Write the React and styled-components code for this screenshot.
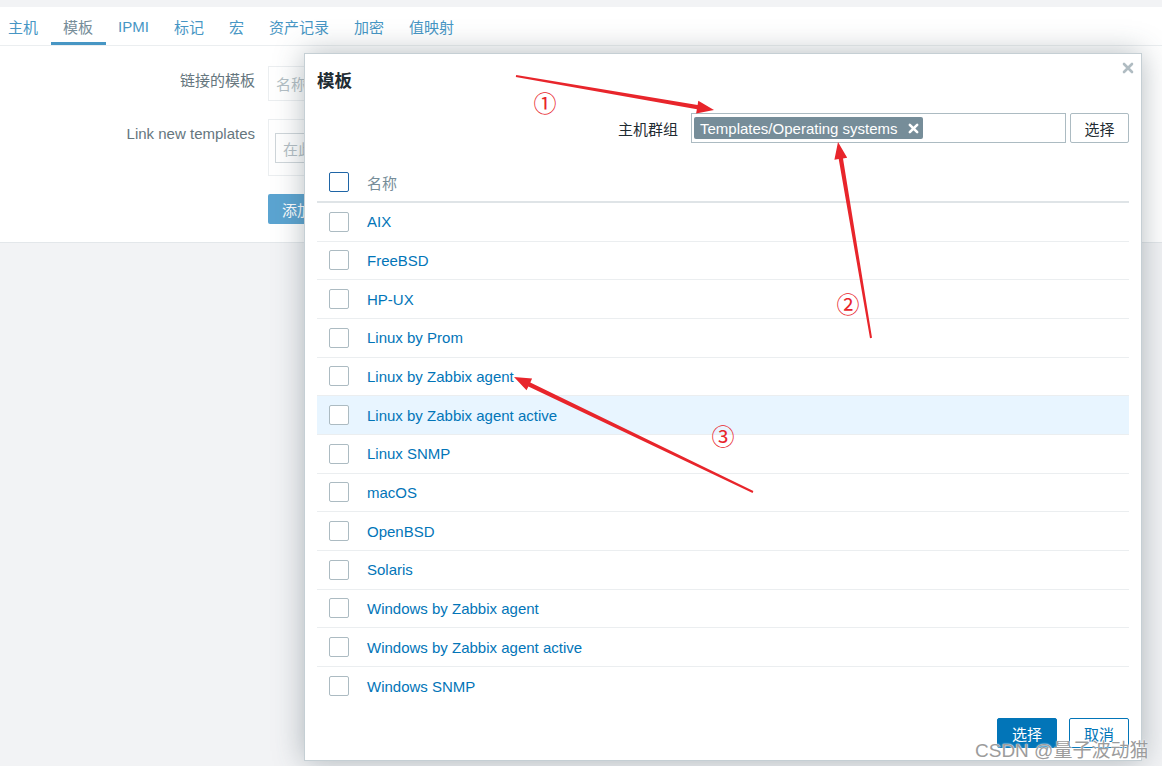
import React from "react";
import styled, { createGlobalStyle } from "styled-components";

const GlobalStyle = createGlobalStyle`
  html, body {
    margin: 0;
    padding: 0;
  }
  body {
    background: #f2f3f5;
    font-family: "Liberation Sans", Arial, "Noto Sans CJK SC", sans-serif;
    font-size: 15px;
    color: #1f2c33;
  }
  * { box-sizing: border-box; }
`;

const tabs = ["主机", "模板", "IPMI", "标记", "宏", "资产记录", "加密", "值映射"];

const templates = [
  "AIX",
  "FreeBSD",
  "HP-UX",
  "Linux by Prom",
  "Linux by Zabbix agent",
  "Linux by Zabbix agent active",
  "Linux SNMP",
  "macOS",
  "OpenBSD",
  "Solaris",
  "Windows by Zabbix agent",
  "Windows by Zabbix agent active",
  "Windows SNMP",
];

const Page = styled.div`
  position: relative;
  width: 1162px;
  height: 766px;
  overflow: hidden;
  padding-top: 7px;
`;

const TabBar = styled.div`
  display: flex;
  height: 39px;
  margin-left: -4.5px;
  background: #fff;
  border-bottom: 1px solid #ebeef0;
`;

const Tab = styled.div`
  display: flex;
  align-items: center;
  padding: 3px 12.5px 0;
  height: 100%;
  color: ${(p) => (p.$active ? "#768d99" : "#4796c4")};
  border-bottom: 3px solid ${(p) => (p.$active ? "#4796c4" : "transparent")};
`;

const FormPanel = styled.div`
  display: grid;
  grid-template-columns: 255px 1fr;
  column-gap: 13px;
  row-gap: 18px;
  align-items: start;
  align-content: start;
  height: 197px;
  padding-top: 20px;
  background: #fff;
  border-bottom: 1px solid #e3e7ea;
`;

const Label = styled.div`
  text-align: right;
  line-height: 30px;
  color: #65767e;
`;

const TextInput = styled.div`
  width: ${(p) => p.$width || "460px"};
  height: ${(p) => p.$height || "35px"};
  display: flex;
  align-items: center;
  padding: 0 7px;
  border: 1px solid ${(p) => p.$border || "#ebeef0"};
  color: #b4bfc5;
  background: #fff;
`;

const Box = styled.div`
  width: 460px;
  height: 57px;
  padding: 13px 6px;
  border: 1px solid #ebeef0;
`;

const AddButton = styled.div`
  width: 60px;
  height: 30px;
  display: flex;
  align-items: center;
  padding-left: 14px;
  border-radius: 2px;
  background: #5ba4d1;
  color: #fff;
`;

const Modal = styled.div`
  position: absolute;
  left: 304px;
  top: 53px;
  width: 838px;
  height: 708px;
  display: flex;
  flex-direction: column;
  padding: 0 12px 12px;
  background: #fff;
  border: 1px solid #c5cfd4;
  box-shadow: 0 0 28px rgba(60, 80, 90, 0.38);
`;

const Close = styled.div`
  position: absolute;
  right: 7px;
  top: 8px;
  width: 12px;
  height: 12px;
  display: flex;
`;

const Title = styled.h4`
  margin: 17px 0 0;
  font-size: 17.5px;
  line-height: 20px;
  font-weight: bold;
  color: #1f2c33;
`;

const FilterRow = styled.div`
  display: flex;
  justify-content: flex-end;
  align-items: center;
  margin-top: 22px;
`;

const FilterLabel = styled.span`
  margin-right: 13px;
  color: #1f2c33;
`;

const MultiSelect = styled.div`
  width: 375px;
  height: 30px;
  display: flex;
  align-items: center;
  padding: 0 2px;
  border: 1px solid #acbbc2;
`;

const Chip = styled.div`
  display: flex;
  align-items: center;
  gap: 10px;
  height: 22px;
  padding: 0 4px 0 6px;
  border-radius: 2px;
  background: #768d99;
  color: #fff;
`;

const PlainButton = styled.div`
  width: 59px;
  height: 30px;
  margin-left: 4px;
  display: flex;
  align-items: center;
  justify-content: center;
  border: 1px solid #acbbc2;
  border-radius: 2px;
  color: #1f2c33;
`;

const Table = styled.div`
  margin-top: 20px;
  display: flex;
  flex-direction: column;
`;

const Row = styled.div`
  display: flex;
  align-items: center;
  height: ${(p) => (p.$head ? "40px" : "38.67px")};
  padding-left: 12px;
  background: ${(p) => (p.$hover ? "#e8f5ff" : "transparent")};
  border-bottom: ${(p) =>
    p.$head ? "2px solid #dfe4e7" : p.$last ? "none" : "1px solid #ebeef0"};
  color: ${(p) => (p.$head ? "#768d99" : "#0275b8")};
`;

const Check = styled.span`
  width: 20px;
  height: 20px;
  margin-right: 18px;
  border: 1px solid ${(p) => (p.$head ? "#1f65a6" : "#acbbc2")};
  border-radius: 2px;
  background: #fff;
`;

const Footer = styled.div`
  margin-top: auto;
  display: flex;
  justify-content: flex-end;
  gap: 12px;
`;

const FooterButton = styled.div`
  width: 60px;
  height: 30px;
  display: flex;
  align-items: center;
  justify-content: center;
  border: 1px solid #0275b8;
  border-radius: 2px;
  background: ${(p) => (p.$primary ? "#0275b8" : "#fff")};
  color: ${(p) => (p.$primary ? "#fff" : "#0275b8")};
`;

const Annotations = styled.svg`
  position: absolute;
  left: 0;
  top: 0;
  pointer-events: none;
`;

const Watermark = styled.div`
  position: absolute;
  left: 975px;
  top: 735px;
  font-size: 19px;
  color: #9c9c9c;
  text-shadow: 0 0 1px #ffffff, 0 0 2px #ffffff;
`;

function Cross({ color, size = 12, width = 2.6 }) {
  return (
    <svg width={size} height={size} viewBox="0 0 12 12">
      <path d="M2 2 L10 10 M10 2 L2 10" stroke={color} strokeWidth={width} strokeLinecap="round" />
    </svg>
  );
}

// tapered arrow: thin tail, wider shaft, filled head
function arrowPoints(x1, y1, x2, y2) {
  const dx = x2 - x1;
  const dy = y2 - y1;
  const len = Math.hypot(dx, dy);
  const ux = dx / len;
  const uy = dy / len;
  const nx = -uy;
  const ny = ux;
  const headLen = 17;
  const headW = 6.5;
  const shaftW = 2.2;
  const tailW = 1;
  const bx = x2 - ux * headLen;
  const by = y2 - uy * headLen;
  const nb = (w) => [bx + nx * w, by + ny * w];
  const nt = (w) => [x1 + nx * w, y1 + ny * w];
  const pts = [
    nt(tailW),
    nb(shaftW),
    nb(headW),
    [x2, y2],
    nb(-headW),
    nb(-shaftW),
    nt(-tailW),
  ];
  return pts.map((p) => p.map((v) => v.toFixed(1)).join(",")).join(" ");
}

const arrows = [
  [516, 76, 714, 110],
  [871, 338, 838, 142],
  [753, 492, 514, 377],
];

const marks = [
  ["①", 545, 104],
  ["②", 848, 305],
  ["③", 723, 437],
];

export default function App() {
  return (
    <>
      <GlobalStyle />
      <Page>
        <TabBar>
          {tabs.map((t) => (
            <Tab key={t} $active={t === "模板"}>
              {t}
            </Tab>
          ))}
        </TabBar>

        <FormPanel>
          <Label>链接的模板</Label>
          <TextInput>名称</TextInput>
          <Label>Link new templates</Label>
          <Box>
            <TextInput $height="30px" $border="#cfd6da" $width="440px">
              在此输入搜索
            </TextInput>
          </Box>
          <span />
          <AddButton>添加</AddButton>
        </FormPanel>

        <Modal>
          <Close>
            <Cross color="#b0bcc2" />
          </Close>
          <Title>模板</Title>
          <FilterRow>
            <FilterLabel>主机群组</FilterLabel>
            <MultiSelect>
              <Chip>
                Templates/Operating systems
                <Cross color="#fff" size={11} width={2.8} />
              </Chip>
            </MultiSelect>
            <PlainButton>选择</PlainButton>
          </FilterRow>

          <Table>
            <Row $head>
              <Check $head />
              名称
            </Row>
            {templates.map((name, i) => (
              <Row
                key={name}
                $hover={name === "Linux by Zabbix agent active"}
                $last={i === templates.length - 1}
              >
                <Check />
                {name}
              </Row>
            ))}
          </Table>

          <Footer>
            <FooterButton $primary>选择</FooterButton>
            <FooterButton>取消</FooterButton>
          </Footer>
        </Modal>

        <Annotations width="1162" height="766">
          {arrows.map((a, i) => (
            <polygon key={i} points={arrowPoints(...a)} fill="#e8252b" />
          ))}
          {marks.map(([m, x, y]) => (
            <text
              key={m}
              x={x}
              y={y + 8}
              textAnchor="middle"
              fontSize="23"
              fill="#e8252b"
              fontFamily='"DejaVu Serif", "Liberation Serif", "Noto Sans CJK SC", serif'
            >
              {m}
            </text>
          ))}
        </Annotations>

        <Watermark>CSDN @量子波动猫</Watermark>
      </Page>
    </>
  );
}
